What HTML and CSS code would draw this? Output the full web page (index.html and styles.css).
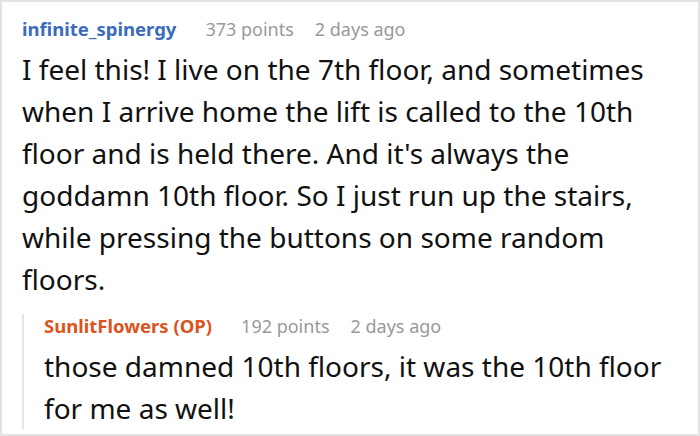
FILE: index.html
```html
<!DOCTYPE html>
<html>
<head>
<meta charset="utf-8">
<link rel="stylesheet" href="styles.css">
</head>
<body>
<div class="frame">
  <div class="comment">
    <div class="meta">
      <span class="user">infinite_spinergy</span>
      <span class="info">373 points</span>
      <span class="info">2 days ago</span>
    </div>
    <p class="body">I feel this! I live on the 7th floor, and sometimes when I arrive home the lift is called to the 10th floor and is held there. And it's always the goddamn 10th floor. So I just run up the stairs, while pressing the buttons on some random floors.</p>
    <div class="reply">
      <div class="meta">
        <span class="user op">SunlitFlowers (OP)</span>
        <span class="info">192 points</span>
        <span class="info">2 days ago</span>
      </div>
      <p class="body">those damned 10th floors, it was the 10th floor for me as well!</p>
    </div>
  </div>
</div>
</body>
</html>
```

FILE: styles.css
```css
html, body {
  margin: 0;
  padding: 0;
  background: #fff;
}
.frame {
  width: 700px;
  height: 436px;
  box-sizing: border-box;
  border: 2px solid #e3e3e3;
  overflow: hidden;
  font-family: "Noto Sans", "Open Sans", sans-serif;
}
.comment {
  padding: 15px 20px 0 20px;
}
.meta {
  display: flex;
  align-items: baseline;
  font-size: 18px;
  line-height: 24px;
  color: #999;
}
.user {
  font-size: 18.5px;
  font-weight: 700;
  color: #3a6bbd;
  margin-right: 29px;
}
.user.op {
  color: #d9541e;
}
.info {
  margin-right: 21px;
}
.body {
  margin: 0;
  font-size: 28px;
  line-height: 42px;
  color: #111;
  padding-top: 7px;
}
.reply {
  margin-top: 14px;
  border-left: 2px solid #e5e5e5;
  padding-left: 20px;
}
```
